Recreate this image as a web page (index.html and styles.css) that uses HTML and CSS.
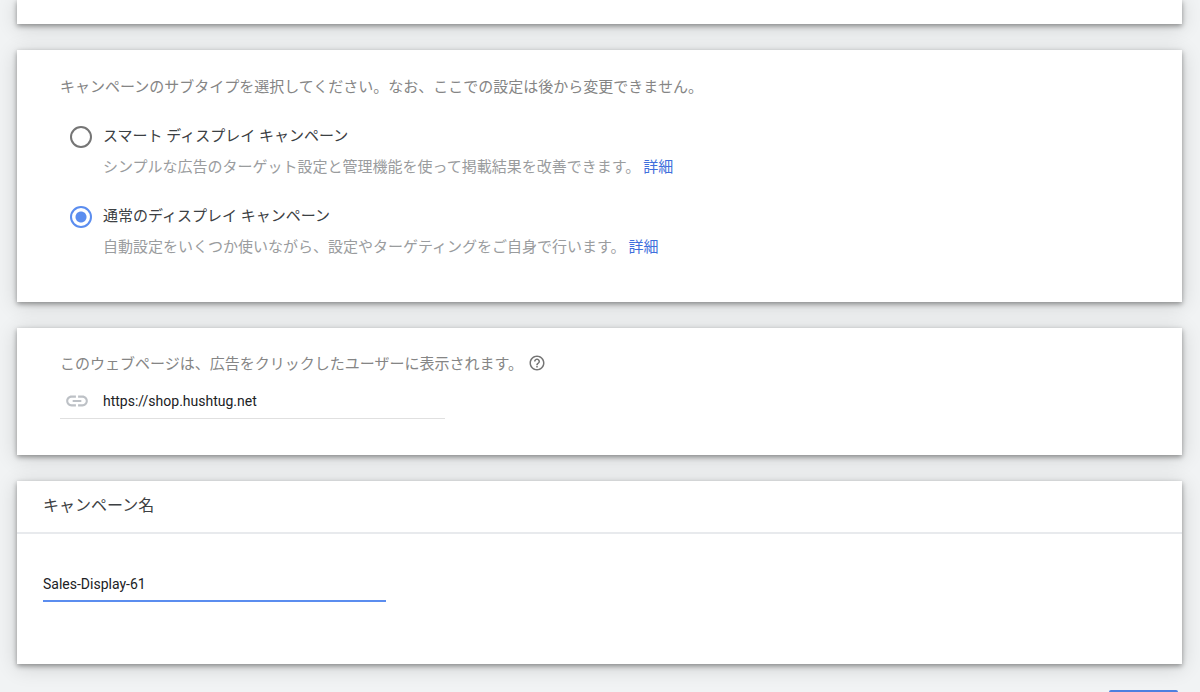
FILE: index.html
```html
<!DOCTYPE html>
<html lang="ja">
<head>
  <meta charset="UTF-8">
  <meta name="viewport" content="width=device-width, initial-scale=1">
  <title>キャンペーンの作成</title>
  <link rel="stylesheet" href="styles.css">
</head>
<body>

<form class="page">
  <section class="card card-top"></section>

  <section class="card card-subtype">
    <p class="lead" id="subtype-label">キャンペーンのサブタイプを選択してください。なお、ここでの設定は後から変更できません。</p>
    <div class="options" role="radiogroup" aria-labelledby="subtype-label">
      <div class="option">
        <input type="radio" name="subtype" id="smart">
        <div class="option-body">
          <label for="smart">スマート ディスプレイ キャンペーン</label>
          <p>シンプルな広告のターゲット設定と管理機能を使って掲載結果を改善できます。<a href="#">詳細</a></p>
        </div>
      </div>
      <div class="option">
        <input type="radio" name="subtype" id="standard" checked>
        <div class="option-body">
          <label for="standard">通常のディスプレイ キャンペーン</label>
          <p>自動設定をいくつか使いながら、設定やターゲティングをご自身で行います。<a href="#">詳細</a></p>
        </div>
      </div>
    </div>
  </section>

  <section class="card card-url">
    <div class="url-label">
      <label class="lead" for="url">このウェブページは、広告をクリックしたユーザーに表示されます。</label>
      <button type="button" class="help" aria-label="ヘルプ">
        <svg viewBox="0 0 24 24" width="18" height="18" fill="currentColor">
          <path d="M11 18h2v-2h-2v2zm1-16C6.48 2 2 6.48 2 12s4.480 10 10 10 10-4.480 10-10S17.520 2 12 2zm0 18c-4.410 0-8-3.590-8-8s3.590-8 8-8 8 3.590 8 8-3.590 8-8 8zm0-14c-2.210 0-4 1.790-4 4h2c0-1.100.9-2 2-2s2 .9 2 2c0 2-3 1.750-3 5h2c0-2.250 3-2.500 3-5 0-2.210-1.790-4-4-4z"/>
        </svg>
      </button>
    </div>
    <div class="url-field">
      <svg viewBox="0 0 24 24" width="26" height="26" fill="currentColor">
        <path d="M3.900 12c0-1.710 1.390-3.100 3.100-3.100h4V7H7c-2.760 0-5 2.240-5 5s2.240 5 5 5h4v-1.900H7c-1.710 0-3.100-1.390-3.100-3.100zM8 13h8v-2H8v2zm9-6h-4v1.900h4c1.710 0 3.100 1.390 3.100 3.100s-1.390 3.100-3.100 3.100h-4V17h4c2.760 0 5-2.240 5-5s-2.240-5-5-5z"/>
      </svg>
      <input type="text" id="url" value="https://shop.hushtug.net">
    </div>
  </section>

  <section class="card">
    <h2 class="card-title"><label for="name">キャンペーン名</label></h2>
    <div class="card-name">
      <input type="text" id="name" class="name-input" value="Sales-Display-61">
    </div>
  </section>

  <div class="actions">
    <button type="submit" class="submit" aria-label="続行"></button>
  </div>
</form>

</body>
</html>
```

FILE: styles.css
```css
* {
  box-sizing: border-box;
  margin: 0;
  padding: 0;
}

body {
  background-color: #f1f3f4;
  color: #3c4043;
  font-family: Roboto, "Noto Sans CJK JP", sans-serif;
  font-size: 15px;
  line-height: 24px;
}

input,
button {
  font: inherit;
}

a {
  color: #3f6fdc;
  text-decoration: none;
}

.page {
  display: flex;
  flex-direction: column;
  gap: 26px;
  padding: 0 18px 0 17px;
}

.card {
  background-color: #fff;
  box-shadow: 0 2px 5px rgba(0, 0, 0, 0.38), 0 3px 20px rgba(0, 0, 0, 0.16);
}

.card-top {
  height: 24px;
}

.lead {
  color: #858585;
}

/* サブタイプ */
.card-subtype {
  padding: 25px 43px 43px;
}

.options {
  display: flex;
  flex-direction: column;
  gap: 25px;
  padding: 25px 10px 0;
}

.option {
  display: flex;
  gap: 11px;
}

.option input {
  appearance: none;
  flex: none;
  width: 22px;
  height: 22px;
  margin-top: 2px;
  border: 2px solid #757575;
  border-radius: 50%;
}

.option input:checked {
  border-color: #5b8def;
  background: radial-gradient(circle, #5b8def 5px, #fff 6px);
}

.option-body {
  display: flex;
  flex-direction: column;
  gap: 7px;
}

.option-body p {
  color: #9a9c9e;
}

.option-body a {
  margin-left: 3px;
}

/* URL */
.card-url {
  padding: 24px 43px 36px;
}

.url-label {
  display: flex;
  align-items: flex-start;
  gap: 5px;
}

.help {
  display: flex;
  padding-top: 2px;
  border: 0;
  background: none;
  color: #757575;
}

.url-field {
  display: flex;
  align-items: center;
  gap: 13px;
  max-width: 385px;
  margin-top: 8px;
  padding: 4px 0 4px 4px;
  border-bottom: 1px solid #e0e0e0;
  color: #bdc1c6;
}

.url-field input {
  flex: 1;
  border: 0;
  outline: 0;
  color: #202124;
  font-size: 14px;
}

/* キャンペーン名 */
.card-title {
  padding: 13px 26px 14px;
  border-bottom: 2px solid #e8eaed;
  font-size: 16px;
  font-weight: 400;
}

.card-name {
  padding: 38px 26px 62px;
}

.name-input {
  display: block;
  width: 100%;
  max-width: 343px;
  padding-bottom: 4px;
  border: 0;
  border-bottom: 2px solid #5b8def;
  outline: 0;
  color: #202124;
  font-size: 14px;
  line-height: 24px;
}

.actions {
  display: flex;
  justify-content: flex-end;
  padding-right: 4px;
}

.submit {
  width: 69px;
  height: 36px;
  border: 0;
  border-radius: 2px;
  background-color: #4d7fe0;
}
```
